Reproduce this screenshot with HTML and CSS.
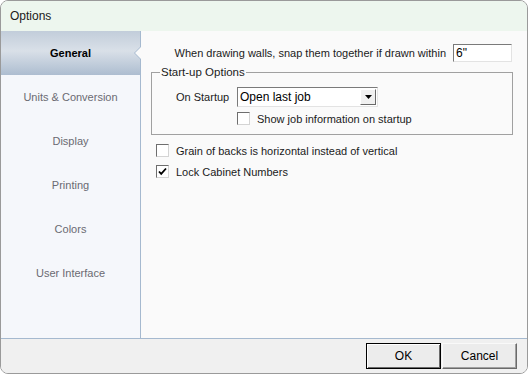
FILE: index.html
```html
<!DOCTYPE html>
<html lang="en">
<head>
  <meta charset="UTF-8">
  <title>Options</title>
  <link rel="stylesheet" href="styles.css">
</head>
<body>
  <div class="window">
    <!-- Title bar -->
    <div class="titlebar">Options</div>

    <div class="main">
      <!-- Page list -->
      <ul class="sidebar">
        <li class="active">General</li>
        <li>Units &amp; Conversion</li>
        <li>Display</li>
        <li>Printing</li>
        <li>Colors</li>
        <li>User Interface</li>
      </ul>

      <!-- General page -->
      <div class="content">
        <div class="snap-row">
          <span>When drawing walls, snap them together if drawn within</span>
          <input class="textbox" type="text" value="6&quot;">
        </div>

        <fieldset class="group">
          <legend>Start-up Options</legend>
          <div class="startup-row">
            <span class="startup-label">On Startup</span>
            <div class="combo">
              <span class="combo-text">Open last job</span>
              <span class="combo-btn">
                <svg width="7" height="4" viewBox="0 0 7 4"><path d="M0 0h7L3.5 4z" fill="#000"/></svg>
              </span>
            </div>
          </div>
          <label class="check indent">
            <span class="box"></span>
            Show job information on startup
          </label>
        </fieldset>

        <label class="check">
          <span class="box"></span>
          Grain of backs is horizontal instead of vertical
        </label>
        <label class="check">
          <span class="box checked">
            <svg width="9" height="9" viewBox="0 0 9 9"><path d="M1 4.5l2.2 2.4L8 1.5" fill="none" stroke="#000" stroke-width="1.8"/></svg>
          </span>
          Lock Cabinet Numbers
        </label>
      </div>
    </div>

    <!-- Buttons -->
    <div class="footer">
      <button class="btn default">OK</button>
      <button class="btn">Cancel</button>
    </div>
  </div>
</body>
</html>
```

FILE: styles.css
```css
* {
  box-sizing: border-box;
}

body {
  margin: 0;
  background: #ffffff;
  font-family: 'Liberation Sans', Arial, sans-serif;
  font-size: 11px;
  color: #1a1a1a;
}

.window {
  width: 528px;
  height: 374px;
  border: 1px solid #9a9a9a;
  border-radius: 8px;
  overflow: hidden;
  display: flex;
  flex-direction: column;
  background: #fafafa;
}

.titlebar {
  height: 30px;
  padding-left: 9px;
  line-height: 30px;
  font-size: 12px;
  background: #edf6ee;
  flex-shrink: 0;
}

.main {
  flex: 1;
  display: flex;
  border-bottom: 1px solid #a5b9cf;
}

.sidebar {
  list-style: none;
  margin: 0;
  padding: 0;
  width: 140px;
  flex-shrink: 0;
  background: #f5f7fb;
  border-right: 1px solid #a5b9cf;
}

.sidebar li {
  height: 44px;
  line-height: 44px;
  text-align: center;
  color: #6a6a72;
  position: relative;
}

.sidebar li.active {
  color: #000;
  font-weight: bold;
  background: linear-gradient(#c2cdda, #d9e0e8 45%, #adbdd0);
}

/* little notch pointing into the selected page */
.sidebar li.active::before,
.sidebar li.active::after {
  content: "";
  position: absolute;
  right: -1px;
  width: 0;
  height: 0;
  border-style: solid;
  border-color: transparent;
}

.sidebar li.active::before {
  top: 15px;
  border-width: 7px 7px 7px 0;
  border-right-color: #a5b9cf;
}

.sidebar li.active::after {
  top: 16px;
  border-width: 6px 6px 6px 0;
  border-right-color: #fafafa;
}

.content {
  flex: 1;
  padding: 13px 14px 0 10px;
}

.snap-row {
  display: flex;
  align-items: center;
  justify-content: flex-end;
  gap: 7px;
  padding-right: 1px;
  white-space: nowrap;
}

.textbox {
  width: 59px;
  height: 18px;
  padding: 0 2px;
  font: inherit;
  font-size: 12px;
  color: #000;
  background: #fff;
  border: 1px solid #e3e3e3;
  border-top-color: #7a7a7a;
  border-left-color: #7a7a7a;
  outline: none;
}

.group {
  margin: 3px 0 0 0;
  padding: 8px 0 5px 0;
  border: 1px solid #a0a0a0;
}

.group legend {
  margin-left: 8px;
  padding: 0 1px;
  line-height: 14px;
  font-size: 11.5px;
  color: #1a1a1a;
}

.startup-row {
  display: flex;
  align-items: center;
  padding-left: 24px;
}

.startup-label {
  width: 61px;
}

.combo {
  width: 141px;
  height: 20px;
  display: flex;
  align-items: center;
  justify-content: space-between;
  background: #fff;
  border: 1px solid #e3e3e3;
  border-top-color: #7a7a7a;
  border-left-color: #7a7a7a;
  padding: 0 1px 0 2px;
  font-size: 12px;
  color: #000;
}

.combo-btn {
  width: 16px;
  height: 16px;
  display: flex;
  align-items: center;
  justify-content: center;
  background: #f0f0f0;
  border: 1px solid #fff;
  border-right-color: #696969;
  border-bottom-color: #696969;
}

.check {
  display: flex;
  align-items: center;
  gap: 7px;
  height: 21px;
  margin-left: 5px;
  white-space: nowrap;
}

.check.indent {
  margin: 1px 0 0 85px;
}

.box {
  width: 13px;
  height: 13px;
  display: flex;
  align-items: center;
  justify-content: center;
  background: #fff;
  border: 1px solid #6e6e6e;
  border-right-color: #d4d4d4;
  border-bottom-color: #d4d4d4;
}

.group + .check {
  margin-top: 5px;
}

.footer {
  height: 34px;
  flex-shrink: 0;
  background: #f0f0f0;
  display: flex;
  justify-content: flex-end;
  align-items: center;
  gap: 1px;
  padding-right: 10px;
}

.btn {
  width: 75px;
  height: 26px;
  font: inherit;
  font-size: 12px;
  color: #000;
  background: #ececec;
  border: 1px solid #f9f9f9;
  border-right-color: #6a6a6a;
  border-bottom-color: #6a6a6a;
  box-shadow: inset -1px -1px 0 #a0a0a0;
}

.btn.default {
  border: 1px solid #000;
  box-shadow: inset 1px 1px 0 #fff, inset -1px -1px 0 #6a6a6a;
}
```
